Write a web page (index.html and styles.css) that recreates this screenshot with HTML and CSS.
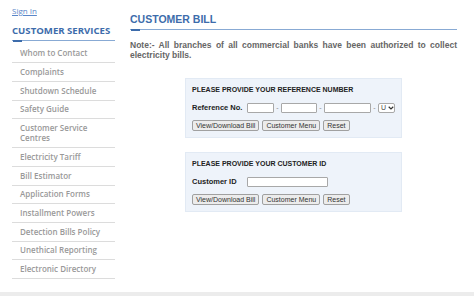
FILE: index.html
```html
<!DOCTYPE html>
<html lang="en">
<head>
    <meta charset="UTF-8">
    <meta name="viewport" content="width=device-width, initial-scale=1.0">
    <title>Customer Bill</title>
    <link rel="stylesheet" href="styles.css">
</head>
<body>
    <div class="page">
        <div class="sidebar">
            <a class="sign-in" href="#">Sign In</a>
            <h2 class="side-title">CUSTOMER SERVICES</h2>
            <ul class="menu">
                <li>Whom to Contact</li>
                <li>Complaints</li>
                <li>Shutdown Schedule</li>
                <li>Safety Guide</li>
                <li>Customer Service<br>Centres</li>
                <li>Electricity Tariff</li>
                <li>Bill Estimator</li>
                <li>Application Forms</li>
                <li>Installment Powers</li>
                <li>Detection Bills Policy</li>
                <li>Unethical Reporting</li>
                <li>Electronic Directory</li>
            </ul>
        </div>

        <div class="main">
            <h1 class="main-title">CUSTOMER BILL</h1>
            <p class="note">Note:- All branches of all commercial banks have been authorized to collect electricity bills.</p>

            <div class="box">
                <div class="box-title">PLEASE PROVIDE YOUR REFERENCE NUMBER</div>
                <div class="row">
                    <label class="label">Reference No.</label>
                    <input class="field f1" type="text">
                    <span class="dash">-</span>
                    <input class="field f2" type="text">
                    <span class="dash">-</span>
                    <input class="field f3" type="text">
                    <span class="dash">-</span>
                    <span class="select">U
                        <svg width="6" height="4" viewBox="0 0 6 4"><path d="M0.7 0.7 L3 3 L5.3 0.7" fill="none" stroke="#333" stroke-width="1.2"/></svg>
                    </span>
                </div>
                <div class="buttons">
                    <button class="btn">View/Download Bill</button>
                    <button class="btn">Customer Menu</button>
                    <button class="btn">Reset</button>
                </div>
            </div>

            <div class="box">
                <div class="box-title">PLEASE PROVIDE YOUR CUSTOMER ID</div>
                <div class="row">
                    <label class="label">Customer ID</label>
                    <input class="field f-id" type="text">
                </div>
                <div class="buttons">
                    <button class="btn">View/Download Bill</button>
                    <button class="btn">Customer Menu</button>
                    <button class="btn">Reset</button>
                </div>
            </div>
        </div>
    </div>
    <div class="footer"></div>
</body>
</html>
```

FILE: styles.css
```css
body {
    margin: 0;
    font-family: "Liberation Sans", Arial, sans-serif;
    color: #333;
    background: #fff;
}
.page {
    display: flex;
    height: 292px;
    padding-left: 12px;
}
.sidebar {
    width: 103px;
    padding-top: 5px;
    font-family: "Open Sans", sans-serif;
}
.sign-in {
    display: block;
    font-size: 8px;
    line-height: 11px;
    color: #5a86c8;
    text-decoration: underline;
}
.side-title {
    position: relative;
    margin: 9px 0 0;
    padding-bottom: 3px;
    font-size: 9.6px;
    line-height: 12px;
    font-weight: 700;
    color: #3d6cab;
    border-bottom: 1px solid #88aad4;
}
.side-title::after,
.main-title::after {
    content: "";
    position: absolute;
    left: 1px;
    bottom: -2px;
    width: 9px;
    height: 2px;
    background: #3d6cab;
}
.menu {
    list-style: none;
    margin: 3.5px 0 0;
    padding: 0;
}
.menu li {
    padding: 3.7px 0 3.7px 8px;
    font-size: 8px;
    line-height: 10.3px;
    font-weight: 600;
    color: #999;
    border-bottom: 1px solid #dcdcdc;
}
.main {
    width: 327px;
    margin-left: 15px;
    padding-top: 13px;
}
.main-title {
    position: relative;
    margin: 0;
    padding-bottom: 3px;
    font-size: 10.5px;
    line-height: 13px;
    font-weight: 700;
    color: #3d6cab;
    border-bottom: 1px solid #88aad4;
}
.note {
    margin: 11px 0 0;
    font-size: 8.5px;
    line-height: 9.5px;
    font-weight: 700;
    color: #666;
    text-align: justify;
}
.box {
    width: 203px;
    margin: 18px auto 0;
    padding: 5px 6px 6px;
    background: #eef3fa;
    border: 1px solid #e2eaf4;
}
.box + .box {
    margin-top: 14px;
}
.box-title {
    font-size: 7px;
    line-height: 12px;
    font-weight: 700;
    color: #222;
}
.row {
    display: flex;
    align-items: center;
    margin-top: 6px;
    height: 11px;
}
.label {
    width: 55px;
    font-size: 7.5px;
    font-weight: 700;
    color: #222;
}
.field {
    box-sizing: border-box;
    height: 10px;
    margin: 0;
    padding: 0;
    border: 1px solid #a8a8a8;
    border-radius: 1px;
    background: #fff;
}
.f1 { width: 27px; }
.f2 { width: 36px; }
.f3 { width: 47px; }
.f-id { width: 81px; }
.dash {
    width: 7px;
    text-align: center;
    font-size: 7px;
    color: #888;
}
.select {
    box-sizing: border-box;
    display: flex;
    align-items: center;
    gap: 2px;
    height: 10px;
    width: 17px;
    padding-left: 2px;
    font-size: 7px;
    color: #444;
    border: 1px solid #a8a8a8;
    border-radius: 2px;
    background: #fff;
}
.buttons {
    display: flex;
    gap: 3px;
    margin-top: 7px;
}
.btn {
    height: 11px;
    margin: 0;
    padding: 0 3px;
    font-family: "Liberation Sans", Arial, sans-serif;
    font-size: 7px;
    line-height: 9px;
    color: #333;
    background: #ececec;
    border: 1px solid #a0a0a0;
    border-radius: 2px;
}
.footer {
    height: 4px;
    background: #ececec;
}
```
